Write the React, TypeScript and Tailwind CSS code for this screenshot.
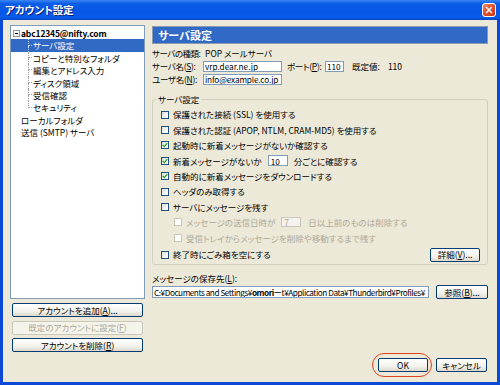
import clsx from "clsx";
import type { ReactNode } from "react";

const JP = "font-['Noto_Sans_CJK_JP','Noto_Sans',sans-serif] [font-feature-settings:'palt']";

const subItems = [
  "サーバ設定",
  "コピーと特別なフォルダ",
  "編集とアドレス入力",
  "ディスク領域",
  "受信確認",
  "セキュリティ",
];

function Check({ checked = false, disabled = false }: { checked?: boolean; disabled?: boolean }) {
  return (
    <span
      className={clsx(
        "flex h-[8px] w-[8px] shrink-0 items-center justify-center border",
        disabled
          ? "border-[#cac8bb] bg-white"
          : "border-[#1c5180] bg-[linear-gradient(135deg,#dcdcd5,#ffffff_80%)]"
      )}
    >
      {checked && (
        <svg viewBox="0 0 8 8" className="h-[6px] w-[6px]">
          <path d="M1 4 L3.2 6.2 L7 1.6" fill="none" stroke="#21a121" strokeWidth="1.7" />
        </svg>
      )}
    </span>
  );
}

function Opt({
  children,
  checked,
  disabled,
  indent,
}: {
  children: ReactNode;
  checked?: boolean;
  disabled?: boolean;
  indent?: boolean;
}) {
  return (
    <div
      className={clsx(
        "flex h-[15.4px] items-center gap-[4px]",
        indent && "pl-[13px]",
        disabled && "text-[#aca899]"
      )}
    >
      <Check checked={checked} disabled={disabled} />
      <span className="flex items-center whitespace-nowrap">{children}</span>
    </div>
  );
}

function Btn({
  children,
  disabled,
  className,
}: {
  children: ReactNode;
  disabled?: boolean;
  className?: string;
}) {
  return (
    <div
      className={clsx(
        "flex h-[14px] items-center justify-center rounded-[2px] border whitespace-nowrap",
        disabled
          ? "border-[#cac8bb] bg-[#f5f4ea] text-[#aca899]"
          : "border-[#003c74] bg-[linear-gradient(#ffffff,#f3f2ec_60%,#dcd8cc)] text-black",
        className
      )}
    >
      {children}
    </div>
  );
}

function Field({ children, className }: { children: ReactNode; className?: string }) {
  return (
    <div
      className={clsx(
        "flex h-[11px] shrink-0 items-center overflow-hidden border border-[#7f9db9] bg-white px-[1px] text-[8.2px] whitespace-nowrap",
        className
      )}
    >
      {children}
    </div>
  );
}

function Stub({ last, light }: { last?: boolean; light?: boolean }) {
  const line = light ? "border-[#c8d6f0]" : "border-[#a0a0a0]";
  return (
    <span className="flex h-full w-[4px] shrink-0 flex-col">
      <span className={clsx("h-1/2 border-b border-l border-dotted", line)} />
      <span className={clsx("h-1/2 border-dotted", !last && "border-l", line)} />
    </span>
  );
}

export default function App() {
  return (
    <div className={clsx("flex h-[385px] w-[500px] flex-col overflow-hidden bg-[#0b48d6] text-[8.5px] leading-none text-black", JP)}>
      {/* title bar */}
      <div className="flex h-[20px] shrink-0 items-center justify-between bg-[linear-gradient(180deg,#3b86f2_0%,#0b5ce8_18%,#0556e6_60%,#0a5dea_85%,#0046c8_100%)] pl-[5px] pr-[4px]">
        <span className="text-[10.5px] font-bold text-white [text-shadow:1px_1px_0_#0a1e78]">アカウント設定</span>
        <span className="flex h-[14px] w-[14px] items-center justify-center rounded-[3px] border border-white bg-[linear-gradient(135deg,#f0906a,#e0512a_45%,#c8351a)]">
          <svg viewBox="0 0 10 10" className="h-[8px] w-[8px]">
            <path d="M2 2 L8 8 M8 2 L2 8" stroke="white" strokeWidth="1.8" strokeLinecap="square" />
          </svg>
        </span>
      </div>

      {/* dialog body */}
      <div className="mx-[3px] mb-[3px] flex flex-1 flex-col bg-[#ece9d8] pl-[7px] pr-[9px] pt-[5px]">
        <div className="flex gap-[7px]">
          {/* left column */}
          <div className="flex w-[135px] shrink-0 flex-col">
            <div className="h-[274px] border border-[#7f9db9] bg-white pt-[1px]">
              <div className="flex h-[12.4px] items-center pl-[2px]">
                <span className="flex h-[7px] w-[7px] items-center justify-center border border-[#919b9c] bg-white">
                  <span className="h-px w-[3px] bg-black" />
                </span>
                <span className="ml-[1px] font-bold tracking-[-0.15px]">abc12345@nifty.com</span>
              </div>
              {subItems.map((item, i) => (
                <div
                  key={item}
                  className={clsx(
                    "flex h-[12.4px] items-center pl-[17px]",
                    i === 0 && "bg-[#316ac5] text-white"
                  )}
                >
                  <Stub last={i === subItems.length - 1} light={i === 0} />
                  <span className="ml-[1px]">{item}</span>
                </div>
              ))}
              <div className="flex h-[12.4px] items-center pl-[10px]">ローカルフォルダ</div>
              <div className="flex h-[12.4px] items-center pl-[10px]">送信 (SMTP) サーバ</div>
            </div>
            <div className="mx-[2px] mt-[4px] flex flex-col gap-[3.5px]">
              <Btn>
                アカウントを追加(<u>A</u>)...
              </Btn>
              <Btn disabled>
                既定のアカウントに設定(<u>F</u>)
              </Btn>
              <Btn>
                アカウントを削除(<u>R</u>)
              </Btn>
            </div>
          </div>

          {/* right column */}
          <div className="flex min-w-0 flex-1 flex-col">
            <div className="mt-[1px] flex h-[18px] items-center border border-[#8d99ad] bg-[#3169c6] px-[5px] text-[11px] font-bold text-white">
              サーバ設定
            </div>

            <div className="mt-[3px] flex h-[12px] items-center whitespace-nowrap">
              <span className="w-[51px] shrink-0 tracking-[-0.5px]">サーバの種類:</span>
              <span className="pl-[2px]">POP メールサーバ</span>
            </div>

            <div className="mt-[2px] flex h-[11px] items-center whitespace-nowrap">
              <span className="w-[51px] shrink-0 tracking-[-0.3px]">
                サーバ名(<u>S</u>):
              </span>
              <Field className="w-[79px]">vrp.dear.ne.jp</Field>
              <span className="ml-[5px] w-[38px] shrink-0 tracking-[-0.3px]">
                ポート(<u>P</u>):
              </span>
              <Field className="w-[19px]">110</Field>
              <span className="ml-[8px]">既定値:</span>
              <span className="ml-[8px]">110</span>
            </div>

            <div className="mt-[2px] flex h-[11px] items-center whitespace-nowrap">
              <span className="w-[51px] shrink-0 tracking-[-0.3px]">
                ユーザ名(<u>N</u>):
              </span>
              <Field className="w-[79px] border-[#5a7fa6] tracking-[-0.15px]">info@example.co.jp</Field>
            </div>

            <fieldset className="mt-[9px] rounded-[3px] border border-[#d0d0bf] pb-[2px] pl-[8px] pr-[7px] pt-[3px]">
              <legend className="-ml-[5px] h-[10px] px-[2px] leading-[10px]">サーバ設定</legend>
              <Opt>保護された接続 (SSL) を使用する</Opt>
              <Opt>保護された認証 (APOP, NTLM, CRAM-MD5) を使用する</Opt>
              <Opt checked>起動時に新着メッセージがないか確認する</Opt>
              <Opt checked>
                新着メッセージがないか
                <Field className="ml-[6px] mr-[6px] w-[20px] px-[2px]">10</Field>
                分ごとに確認する
              </Opt>
              <Opt checked>自動的に新着メッセージをダウンロードする</Opt>
              <Opt>ヘッダのみ取得する</Opt>
              <Opt>サーバにメッセージを残す</Opt>
              <Opt indent disabled>
                メッセージの送信日時が
                <span className="ml-[6px] mr-[7px] flex h-[10px] w-[20px] items-center border border-[#c9c7ba] bg-[#f4f3ee] px-[2px]">7</span>
                日以上前のものは削除する
              </Opt>
              <Opt indent disabled>
                受信トレイからメッセージを削除や移動するまで残す
              </Opt>
              <div className="mt-[2px] flex h-[14px] items-center justify-between">
                <div className="flex items-center gap-[4px]">
                  <Check />
                  <span>終了時にごみ箱を空にする</span>
                </div>
                <Btn className="w-[50px]">
                  詳細(<u>V</u>)...
                </Btn>
              </div>
            </fieldset>

            <div className="mt-[8px] flex h-[12px] items-center">
              メッセージの保存先(<u>L</u>):
            </div>
            <div className="mt-[1px] flex h-[13px] items-center gap-[7px]">
              <Field className="h-[12px] min-w-0 flex-1 shrink bg-[#f5f4ee] px-[0px] text-[7px] tracking-[-0.45px]">
                C:¥Documents and Settings¥<b>omori</b>ーt¥Application Data¥Thunderbird¥Profiles¥
              </Field>
              <Btn className="h-[13px] w-[52px] shrink-0">
                参照(<u>B</u>)...
              </Btn>
            </div>
          </div>
        </div>

        {/* OK / cancel */}
        <div className="mt-[6px] flex justify-end gap-[8px] pr-[1px]">
          <div className="relative">
            <Btn className="w-[50px]">OK</Btn>
            <span className="pointer-events-none absolute -bottom-[5px] -left-[6px] -right-[4px] -top-[5px] rounded-[12px] border-[1.5px] border-[#e0401c]" />
          </div>
          <Btn className="w-[51px]">キャンセル</Btn>
        </div>
      </div>
    </div>
  );
}
